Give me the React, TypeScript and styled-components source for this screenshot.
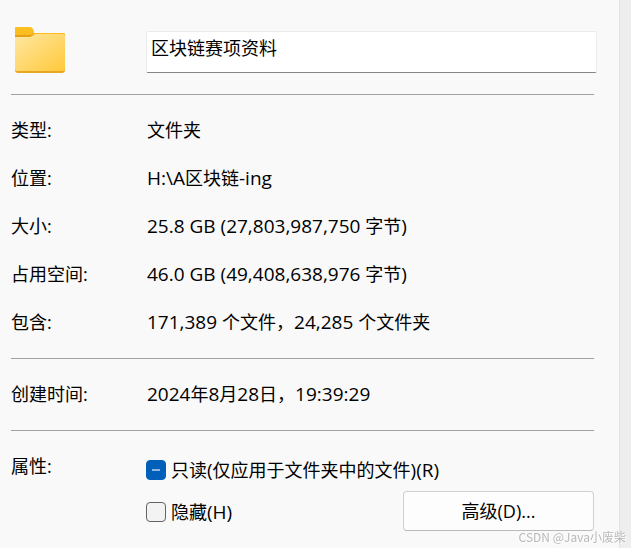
import React, { useEffect, useRef, useState } from 'react';
import styled, { createGlobalStyle } from 'styled-components';

const GlobalStyle = createGlobalStyle`
  * { box-sizing: border-box; }
  body {
    margin: 0;
    background: #f9f9f9;
    color: #000;
    font: 18px/24px "Open Sans", "Noto Sans CJK SC", sans-serif;
  }
  button, input { font: inherit; color: inherit; }
`;

const Dialog = styled.main`
  display: flex;
  min-height: 100vh;
  overflow: hidden;
`;

const Sheet = styled.form`
  flex: 1;
  min-width: 0;
  padding: 23px 25px 0 11px;
`;

const Edge = styled.div`
  flex: 0 0 12px;
  background: #eee;
  border-left: 1px solid #e3e3e3;
`;

const Columns = styled.div`
  display: grid;
  grid-template-columns: 136px minmax(0, 1fr);
`;

const Header = styled(Columns)`
  align-items: center;
  height: 56px;
  margin-bottom: 15px;
`;

const FolderPicture = styled.svg`
  display: block;
  width: 58px;
  height: 56px;
`;

const NameInput = styled.input`
  display: block;
  height: 42px;
  margin: 2px -3px 0 -1px;
  padding: 0 4px 10px;
  border: 1px solid #ececec;
  border-bottom-color: #868686;
  border-radius: 2px;
  background: #fff;
  outline: none;
`;

const Rule = styled.hr`
  height: 1px;
  margin: 11px 0 12px;
  border: 0;
  background: #a0a0a0;
`;

const Details = styled.dl`
  margin: 0;
`;

const Detail = styled(Columns)`
  align-items: center;
  height: 48px;
  padding-bottom: 2px;
`;

const Term = styled.dt`
  white-space: nowrap;
`;

const Value = styled.dd`
  margin: 0;
  white-space: nowrap;
`;

const Latin = styled.span`
  font-size: 19px;
`;

const Attributes = styled(Columns)`
  padding-top: 11px;
`;

const Options = styled.div`
  display: flex;
  flex-direction: column;
  gap: 7px;
  margin: 2px 0 0 -1px;
`;

const OptionRow = styled.div`
  display: flex;
  justify-content: space-between;
  align-items: flex-start;
`;

const Option = styled.label<{ $tall?: boolean }>`
  display: flex;
  align-items: center;
  gap: 5px;
  height: ${({ $tall }) => ($tall ? 42 : 28)}px;
  white-space: nowrap;
`;

const CheckBox = styled.input`
  appearance: none;
  display: grid;
  place-items: center;
  width: 20px;
  height: 20px;
  margin: 0;
  border: 1px solid #626262;
  border-radius: 4px;
  background: #f3f3f3;

  &:checked, &:indeterminate {
    border-color: #005fb8;
    background: #005fb8;
  }
  &:checked::after, &:indeterminate::after {
    content: "";
    width: 8px;
    height: 2px;
    background: #8db9e0;
  }
`;

const AdvancedButton = styled.button`
  width: 191px;
  height: 40px;
  padding: 0;
  border: 1px solid #d0d0d0;
  border-bottom-color: #bababa;
  border-radius: 4px;
  background: #fdfdfd;
`;

const Watermark = styled.div`
  position: fixed;
  right: 5px;
  bottom: 2px;
  color: #b8b8b8;
  font-family: "Noto Sans CJK SC", sans-serif;
  font-size: 12px;
  line-height: 18px;
  text-shadow: 1px 1px 0 #fff;
  white-space: nowrap;
  pointer-events: none;
`;

const details = [
  ['类型:', '文件夹'],
  ['位置:', 'H:\\A区块链-ing'],
  ['大小:', '25.8 GB (27,803,987,750 字节)'],
  ['占用空间:', '46.0 GB (49,408,638,976 字节)'],
  ['包含:', '171,389 个文件，24,285 个文件夹'],
];

const dates = [['创建时间:', '2024年8月28日，19:39:29']];

function FolderIcon() {
  return (
    <FolderPicture viewBox="0 0 58 56" aria-hidden="true">
      <defs>
        <linearGradient id="folder-front" x1="0" y1="0" x2="1" y2="1">
          <stop offset="0" stopColor="#ffe7a2" />
          <stop offset="1" stopColor="#ffc93a" />
        </linearGradient>
        <linearGradient id="folder-tab" x1="0" y1="0" x2="0" y2="1">
          <stop offset="0" stopColor="#fdc120" />
          <stop offset="1" stopColor="#f5ad12" />
        </linearGradient>
      </defs>
      <path d="M4 5Q4 4 5 4H19Q21 4 22 6Q23 7 23 10H53Q54 10 54 12V30H4Z" fill="url(#folder-tab)" />
      <path d="M4 14H18Q20 14 21 13Q23 11 25 11H52Q54 11 54 13V47Q54 50 51 50H7Q4 50 4 47Z" fill="#e8a722" />
      <path d="M4 14H18Q20 14 21 13Q23 11 25 11H52Q54 11 54 13V46Q54 48 51 48H7Q4 48 4 46Z" fill="url(#folder-front)" />
      <path d="M4 12H18Q21 12 23 10L22 12Q20 14 18 14H4Z" fill="#e3a019" />
    </FolderPicture>
  );
}

function MixedText({ text }: { text: string }) {
  return (
    <span>
      {text.split(/([\x20-\x7e]+)/).map((part, index) =>
        index % 2 === 1 ? <Latin key={index}>{part}</Latin> : part,
      )}
    </span>
  );
}

function DetailList({ items }: { items: string[][] }) {
  return (
    <Details>
      {items.map(([term, value]) => (
        <Detail key={term}>
          <Term>{term}</Term>
          <Value>
            <MixedText text={value} />
          </Value>
        </Detail>
      ))}
    </Details>
  );
}

export default function App() {
  const [name, setName] = useState('区块链赛项资料');
  const readOnlyBox = useRef<HTMLInputElement>(null);

  useEffect(() => {
    if (readOnlyBox.current) readOnlyBox.current.indeterminate = true;
  }, []);

  return (
    <>
      <GlobalStyle />
      <Dialog>
        <Sheet onSubmit={(event) => event.preventDefault()}>
          <Header>
            <FolderIcon />
            <NameInput
              type="text"
              aria-label="名称"
              value={name}
              onChange={(event) => setName(event.target.value)}
            />
          </Header>
          <Rule />
          <DetailList items={details} />
          <Rule />
          <DetailList items={dates} />
          <Rule />
          <Attributes role="group" aria-labelledby="attributes-label">
            <span id="attributes-label">属性:</span>
            <Options>
              <Option>
                <CheckBox type="checkbox" ref={readOnlyBox} />
                <MixedText text="只读(仅应用于文件夹中的文件)(R)" />
              </Option>
              <OptionRow>
                <Option $tall>
                  <CheckBox type="checkbox" />
                  <MixedText text="隐藏(H)" />
                </Option>
                <AdvancedButton type="button">高级(D)...</AdvancedButton>
              </OptionRow>
            </Options>
          </Attributes>
        </Sheet>
        <Edge />
      </Dialog>
      <Watermark>CSDN @Java小废柴</Watermark>
    </>
  );
}
